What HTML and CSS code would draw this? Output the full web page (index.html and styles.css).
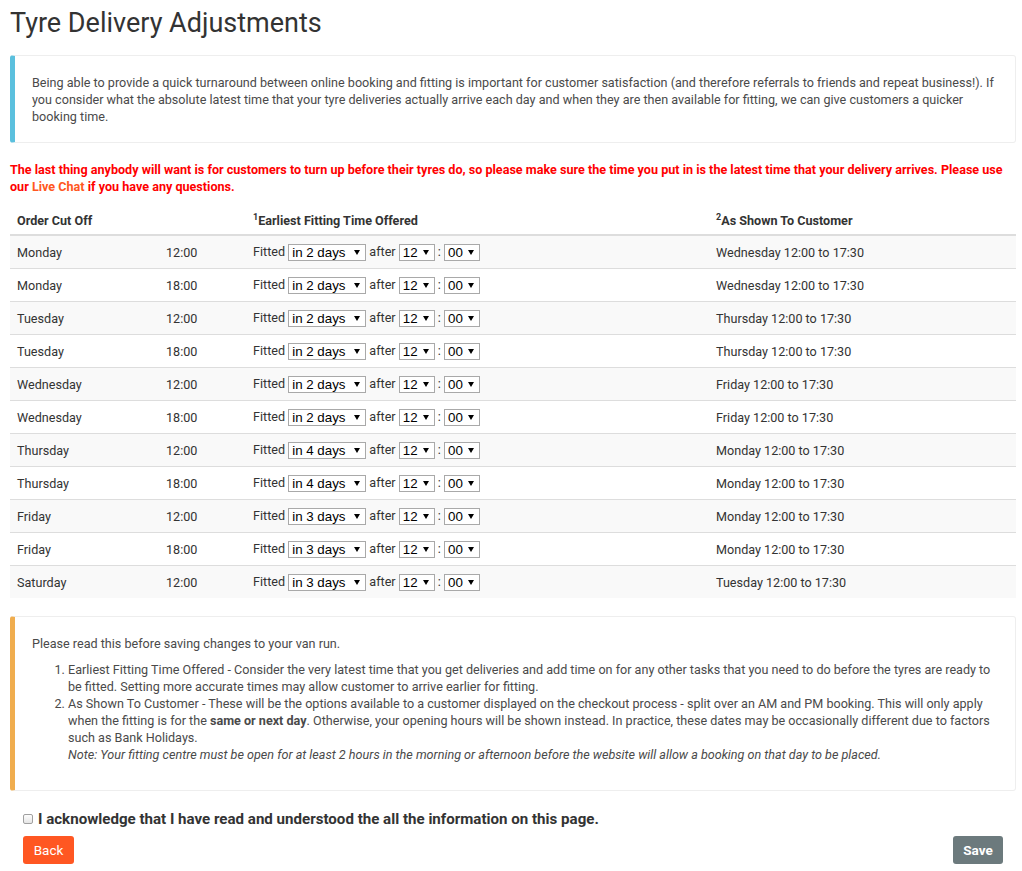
FILE: index.html
```html
<!DOCTYPE html>
<html lang="en">
<head>
<meta charset="utf-8">
<title>Tyre Delivery Adjustments</title>
<link rel="stylesheet" href="styles.css">
</head>
<body>
<div class="page">
  <h1 class="title">Tyre Delivery Adjustments</h1>

  <div class="callout callout-info">
    Being able to provide a quick turnaround between online booking and fitting is important for customer satisfaction (and therefore referrals to friends and repeat business!). If you consider what the absolute latest time that your tyre deliveries actually arrive each day and when they are then available for fitting, we can give customers a quicker booking time.
  </div>

  <p class="warning-text">The last thing anybody will want is for customers to turn up before their tyres do, so please make sure the time you put in is the latest time that your delivery arrives. Please use our <a class="live-chat" href="#">Live Chat</a> if you have any questions.</p>

  <table class="schedule">
    <colgroup>
      <col class="c-day"><col class="c-time"><col class="c-fit"><col class="c-shown">
    </colgroup>
    <thead>
      <tr>
        <th>Order Cut Off</th>
        <th></th>
        <th><sup>1</sup>Earliest Fitting Time Offered</th>
        <th><sup>2</sup>As Shown To Customer</th>
      </tr>
    </thead>
    <tbody id="rows"></tbody>
  </table>

  <div class="callout callout-warning">
    <p class="callout-lead">Please read this before saving changes to your van run.</p>
    <ol class="notes">
      <li>Earliest Fitting Time Offered - Consider the very latest time that you get deliveries and add time on for any other tasks that you need to do before the tyres are ready to be fitted. Setting more accurate times may allow customer to arrive earlier for fitting.</li>
      <li>As Shown To Customer - These will be the options available to a customer displayed on the checkout process - split over an AM and PM booking. This will only apply when the fitting is for the <strong>same or next day</strong>. Otherwise, your opening hours will be shown instead. In practice, these dates may be occasionally different due to factors such as Bank Holidays.<br><em>Note: Your fitting centre must be open for at least 2 hours in the morning or afternoon before the website will allow a booking on that day to be placed.</em></li>
    </ol>
  </div>

  <label class="ack"><input type="checkbox" class="ack-box"> I acknowledge that I have read and understood the all the information on this page.</label>

  <div class="actions">
    <button class="btn btn-back" type="button">Back</button>
    <button class="btn btn-save" type="button">Save</button>
  </div>
</div>
<script src="app.js"></script>
</body>
</html>
```

FILE: app.js
```js
(function () {
  var data = [
    ["Monday", "12:00", 2, "Wednesday 12:00 to 17:30"],
    ["Monday", "18:00", 2, "Wednesday 12:00 to 17:30"],
    ["Tuesday", "12:00", 2, "Thursday 12:00 to 17:30"],
    ["Tuesday", "18:00", 2, "Thursday 12:00 to 17:30"],
    ["Wednesday", "12:00", 2, "Friday 12:00 to 17:30"],
    ["Wednesday", "18:00", 2, "Friday 12:00 to 17:30"],
    ["Thursday", "12:00", 4, "Monday 12:00 to 17:30"],
    ["Thursday", "18:00", 4, "Monday 12:00 to 17:30"],
    ["Friday", "12:00", 3, "Monday 12:00 to 17:30"],
    ["Friday", "18:00", 3, "Monday 12:00 to 17:30"],
    ["Saturday", "12:00", 3, "Tuesday 12:00 to 17:30"]
  ];
  function opts(list, sel) {
    return list.map(function (o) {
      return '<option' + (o[0] === sel ? ' selected' : '') + ' value="' + o[0] + '">' + o[1] + '</option>';
    }).join("");
  }
  var days = [];
  for (var d = 0; d <= 7; d++) {
    days.push([d, d === 0 ? "same day" : (d === 1 ? "next day" : "in " + d + " days")]);
  }
  var hours = [];
  for (var h = 6; h <= 20; h++) { var hs = (h < 10 ? "0" : "") + h; hours.push([hs, hs]); }
  var mins = [["00", "00"], ["15", "15"], ["30", "30"], ["45", "45"]];
  var html = data.map(function (r) {
    return '<tr>' +
      '<td>' + r[0] + '</td>' +
      '<td>' + r[1] + '</td>' +
      '<td>Fitted <span class="sel sel-days"><select>' + opts(days, r[2]) + '</select></span>' +
      ' after <span class="sel sel-num"><select>' + opts(hours, "12") + '</select></span>' +
      ' : <span class="sel sel-num"><select>' + opts(mins, "00") + '</select></span></td>' +
      '<td>' + r[3] + '</td>' +
      '</tr>';
  }).join("");
  document.getElementById("rows").innerHTML = html;
})();
```

FILE: styles.css
```css
html, body {
  margin: 0;
  padding: 0;
  background: #fff;
}
body {
  font-family: Roboto, "Liberation Sans", Arial, sans-serif;
  font-size: 12.6px;
  line-height: 17px;
  color: #333;
}
.page {
  padding: 6px 6px 0 10px;
}
.title {
  margin: 0 0 15px;
  font-size: 27px;
  line-height: 34px;
  font-weight: 400;
  color: #333;
}
.callout {
  border: 1px solid #eee;
  border-left-width: 5px;
  border-radius: 3px;
  padding: 18px 17px 17px;
  color: #4a4a4a;
}
.callout-info {
  border-left-color: #5bc0de;
  margin-bottom: 18px;
}
.callout-warning {
  border-left-color: #f0ad4e;
  margin-bottom: 18px;
  padding-bottom: 17px;
}
.warning-text {
  margin: 0 0 7px;
  color: #ff0000;
  font-weight: 700;
}
.live-chat {
  color: #ff5722;
  text-decoration: none;
}
.schedule {
  width: 100%;
  border-collapse: separate;
  border-spacing: 0;
  margin-bottom: 18px;
}
.c-day { width: 149px; }
.c-time { width: 87px; }
.c-fit { width: 463px; }
.schedule th {
  text-align: left;
  font-weight: 700;
  padding: 10px 7px 5px;
  border-bottom: 2px solid #ddd;
  vertical-align: bottom;
}
.schedule sup {
  font-size: 9px;
  line-height: 0;
  vertical-align: 5px;
}
.schedule td {
  height: 32px;
  padding: 0 7px;
  border-top: 1px solid #ddd;
  vertical-align: middle;
  white-space: nowrap;
}
.schedule tbody tr:first-child td {
  border-top: 0;
  height: 32px;
}
.schedule tbody tr:nth-child(odd) td {
  background: #f9f9f9;
}
.sel {
  position: relative;
  display: inline-block;
  vertical-align: middle;
  height: 17px;
  margin-top: -2px;
}
.sel select {
  -webkit-appearance: none;
  appearance: none;
  box-sizing: border-box;
  display: block;
  height: 17px;
  margin: 0;
  padding: 0 0 0 3px;
  border: 1px solid #a9a9a9;
  border-radius: 0;
  background: #fff;
  color: #000;
  font-family: "Liberation Sans", Arial, sans-serif;
  font-size: 13.33px;
  line-height: 15px;
  outline: none;
}
.sel-days select { width: 78px; }
.sel-num select { width: 36px; }
.sel::after {
  content: "";
  position: absolute;
  right: 6px;
  top: 6px;
  width: 0;
  height: 0;
  border-left: 3.5px solid transparent;
  border-right: 3.5px solid transparent;
  border-top: 5px solid #000;
  pointer-events: none;
}
.callout-lead {
  margin: 0 0 9px;
}
.notes {
  margin: 0 0 10px;
  padding-left: 36px;
}
.ack {
  display: flex;
  align-items: center;
  gap: 5px;
  padding-left: 13px;
  font-size: 15.1px;
  line-height: 20px;
  font-weight: 700;
  color: #333;
}
.ack-box {
  -webkit-appearance: none;
  appearance: none;
  box-sizing: border-box;
  width: 10px;
  height: 10px;
  margin: 0;
  border: 1px solid #a0a0a0;
  border-radius: 2px;
  background: linear-gradient(#fdfdfd, #e6e6e6);
}
.actions {
  display: flex;
  justify-content: space-between;
  padding: 7px 13px 0;
}
.btn {
  height: 28px;
  padding: 0;
  border: 0;
  border-radius: 3px;
  color: #fff;
  font-family: Roboto, "Liberation Sans", Arial, sans-serif;
  font-size: 13.5px;
  cursor: pointer;
}
.btn-back {
  background: #ff5722;
  width: 51px;
}
.btn-save {
  background: #6c7a7d;
  width: 50px;
  font-weight: 700;
}
```
